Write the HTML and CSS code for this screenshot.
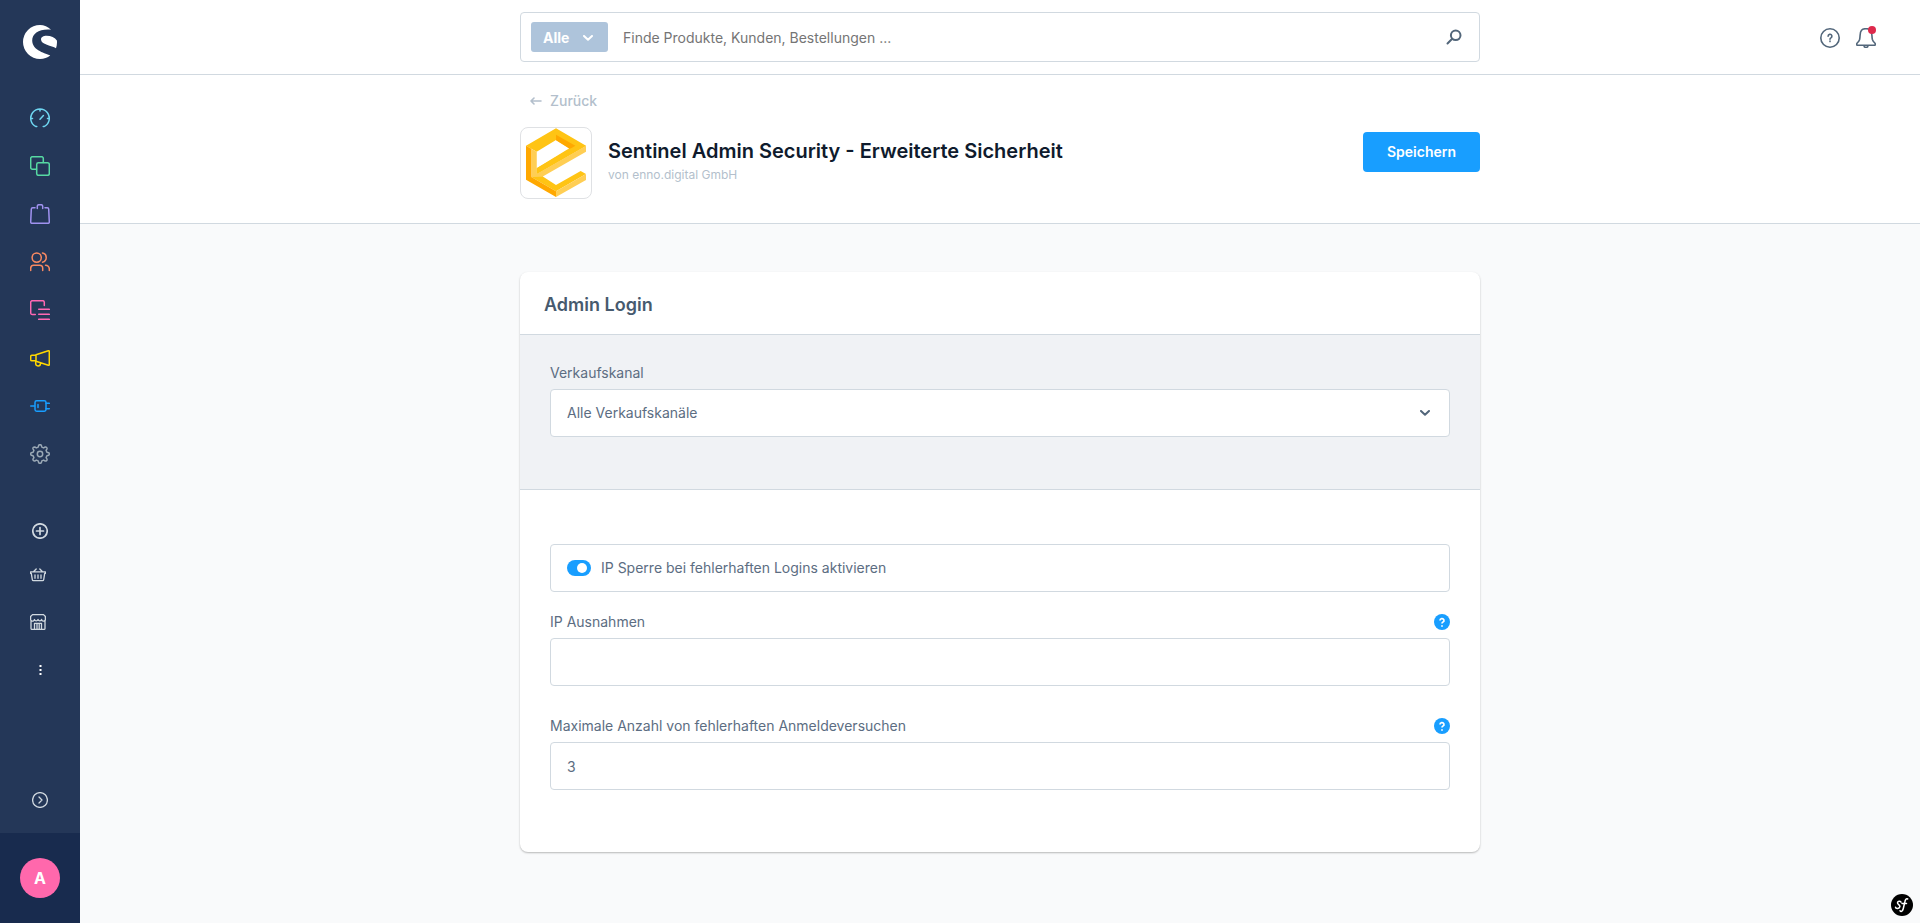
FILE: index.html
```html
<!DOCTYPE html>
<html lang="de">
<head>
<meta charset="utf-8">
<meta name="viewport" content="width=device-width, initial-scale=1">
<title>Sentinel Admin Security</title>
<link rel="stylesheet" href="styles.css">
</head>
<body class="app">
<aside class="sidebar">
  <a class="brand" href="#" aria-label="Startseite">
    <svg width="34" height="34" viewBox="0 0 34 34" fill="#fff"><path d="M28 4.700C25 1.800 21 0 17 0A17 17 0 0 0 17 34C21 34 24.500 32.700 27.200 30.500C23.500 28.300 9.200 26 9.200 15.500C9.200 8.500 16.500 3.600 28 4.700Z"/><path d="M18 14.500C18 12 20.500 10.800 23.500 10.800C28 10.800 32 12.500 33.900 15.500C34.200 18.500 33.800 21 33 23.200C29 20.800 18 19.500 18 14.500Z"/></svg>
  </a>
  <nav class="nav">
    <a class="nav-item cyan" href="#" aria-label="Dashboard"><svg class="icon" viewBox="0 0 20 20"><path d="M6.800 18.600H6A9.300 9.300 0 1 1 14 18.600H13.200M10 1.500V3M1 10.500H2.500M17.500 10.500H19M10 11.200L13.400 7.500"/></svg></a>
    <a class="nav-item green" href="#" aria-label="Kataloge"><svg class="icon" viewBox="0 0 20 20"><rect x="6.700" y="6.700" width="12.600" height="12.600" rx="1.700"/><path d="M6.500 13.300H2.400A1.700 1.700 0 0 1 .7 11.600V2.400A1.700 1.700 0 0 1 2.400 .7H11.600A1.700 1.700 0 0 1 13.300 2.400V6.500"/></svg></a>
    <a class="nav-item violet" href="#" aria-label="Bestellungen"><svg class="icon" viewBox="0 0 20 20"><path d="M5 3.800H2.700A1.400 1.400 0 0 0 1.300 5.100L.7 18A1.300 1.300 0 0 0 2 19.300H18A1.300 1.300 0 0 0 19.300 18L18.700 5.100A1.400 1.400 0 0 0 17.300 3.800H15M7.300 4.500V2.300A1.600 1.600 0 0 1 8.900 .7H11.100A1.600 1.600 0 0 1 12.700 2.300V4.500"/></svg></a>
    <a class="nav-item coral" href="#" aria-label="Kunden"><svg class="icon" viewBox="0 0 20 20"><circle cx="6.700" cy="5.600" r="4.600"/><path d="M12.500 1A4.700 4.700 0 0 1 12.500 10.200M.7 18.500V16.200A3 3 0 0 1 3.700 13.200H9.700A3 3 0 0 1 12.700 16.200V18.500M15.500 13.200A3.700 3.700 0 0 1 19.300 16.900V18.500"/></svg></a>
    <a class="nav-item pink" href="#" aria-label="Inhalte"><svg class="icon" viewBox="0 0 20 20"><path d="M5.300 14.500H2.300A1.600 1.600 0 0 1 .7 12.900V2.300A1.600 1.600 0 0 1 2.300 .7H12.700A1.600 1.600 0 0 1 14.300 2.300V5.500M8.700 9.300H19.300M8.700 14.300H19.300M8.700 19.300H19.300"/></svg></a>
    <a class="nav-item yellow" href="#" aria-label="Marketing"><svg class="icon" viewBox="0 0 20 20"><path d="M6 6.800L18.300 2.700C19 2.500 19.300 2.800 19.300 3.400V16.500C19.300 17.100 19 17.400 18.300 17.200L6 13.200M6 6.800V13.200M6 7.300H1.800A1.100 1.100 0 0 0 .7 8.400V11.700A1.100 1.100 0 0 0 1.800 12.800H6M5.700 13.200V15.400A2.300 2.300 0 0 0 10.500 15.600V14.800"/></svg></a>
    <a class="nav-item blue" href="#" aria-label="Erweiterungen"><svg class="icon" viewBox="0 0 20 20"><rect x="5" y="4.700" width="11" height="10.600" rx="1.700"/><path d="M.7 10H4.500M8 8.500V11.500M16 7.300H19.300M16 12.700H19.300"/></svg></a>
    <a class="nav-item grey" href="#" aria-label="Einstellungen"><svg class="icon" viewBox="0 0 20 20"><circle cx="10" cy="10" r="2.700"/><path d="M8.200 3.100L8.700 1.300Q9 .7 10 .7T11.300 1.300L11.800 3.100L13.600 3.900L15.200 3Q16 2.700 16.600 3.400T17 4.800L16.100 6.400L16.900 8.200L18.700 8.700Q19.300 9 19.300 10T18.700 11.300L16.900 11.800L16.100 13.600L17 15.200Q17.300 16 16.600 16.600T15.200 17L13.600 16.100L11.800 16.900L11.300 18.700Q11 19.300 10 19.300T8.700 18.700L8.200 16.900L6.400 16.100L4.800 17Q4 17.300 3.400 16.600T3 15.200L3.900 13.600L3.100 11.800L1.300 11.300Q.7 11 .7 10T1.300 8.700L3.100 8.200L3.900 6.400L3 4.800Q2.700 4 3.400 3.400T4.800 3L6.400 3.900Z"/></svg></a>
  </nav>
  <div class="channels">
    <button class="channel" type="button" aria-label="Verkaufskanal hinzufügen"><svg width="16" height="16" viewBox="0 0 16 16" class="line thick"><circle cx="8" cy="8" r="7.200"/><path d="M8 4.500V11.500M4.500 8H11.500"/></svg></button>
    <a class="channel shifted" href="#" aria-label="Headless"><svg width="16" height="16" viewBox="0 0 16 16" class="line"><path d="M.6 4.800H15.400V6.400H14.700L13.700 12.600A1.300 1.300 0 0 1 12.400 13.700H3.600A1.300 1.300 0 0 1 2.300 12.600L1.300 6.400H.6ZM3.700 4.500L6.200 2M12.300 4.500L9.800 2M5 8V11.300M8 8V11.300M11 8V11.300"/></svg></a>
    <a class="channel shifted" href="#" aria-label="Storefront"><svg width="16" height="16" viewBox="0 0 16 16" class="line"><path d="M1 6.500V14.400Q1 15.400 2 15.400H14Q15 15.400 15 14.400V6.500M2.500 .6H13.500L15.400 2.500V5A1.900 1.900 0 0 1 11.600 5.500A1.900 1.900 0 0 1 8 5.500A1.900 1.900 0 0 1 4.400 5.500A1.900 1.900 0 0 1 .6 5V2.500ZM4.500 15V9.300H11.500V15M7 9.500V15M9.200 9.500V15"/></svg></a>
    <button class="channel" type="button" aria-label="Mehr"><svg width="16" height="16" viewBox="0 0 16 16" fill="#fff"><path d="M7.500 3h2v2h-2zM7.500 7h2v2h-2zM7.500 11h2v2h-2z"/></svg></button>
  </div>
  <button class="collapse" type="button" aria-label="Menü ausklappen"><svg width="16" height="16" viewBox="0 0 16 16" class="line"><circle cx="8" cy="8" r="7.400"/><path d="M7 5L10 8L7 11"/></svg></button>
  <div class="user"><button class="avatar" type="button">A</button></div>
</aside>
<div class="page">
  <header class="topbar">
    <div class="search">
      <button class="scope" type="button">Alle <svg width="10" height="6" viewBox="0 0 10 6" class="chevron"><path d="M1 1L5 4.800L9 1"/></svg></button>
      <input class="search-input" type="search" aria-label="Suche" placeholder="Finde Produkte, Kunden, Bestellungen ...">
      <button class="plain" type="button" aria-label="Suchen"><svg width="16" height="16" viewBox="0 0 16 16" class="slate bold"><circle cx="9.700" cy="6.300" r="4.800"/><path d="M6.200 9.800L1.500 14.500"/></svg></button>
    </div>
    <div class="actions">
      <button class="plain" type="button" aria-label="Hilfe"><svg width="20" height="20" viewBox="0 0 20 20" class="slate"><circle cx="10" cy="10" r="9.200"/><path d="M8.100 8.300A1.900 1.900 0 1 1 10.900 9.900Q10 10.300 10 11.200M10 13V13.600"/></svg></button>
      <button class="plain bell" type="button" aria-label="Benachrichtigungen"><svg width="20" height="20" viewBox="0 0 20 20" class="slate"><path d="M1.600 17.200Q.6 17.200 .7 16C1 14.500 2.700 14.500 3.600 11.500C4.500 8 3.500 4.500 5.500 2.200Q7 .7 10 .7T14.500 2.200C16.500 4.500 15.500 8 16.400 11.500C17.300 14.500 19 14.500 19.300 16Q19.400 17.200 18.400 17.200ZM8 17.400A2 2 0 0 0 12 17.400"/></svg><span class="badge"></span></button>
    </div>
  </header>
  <section class="heading">
    <div class="container">
      <a class="back" href="#"><svg width="12" height="8" viewBox="0 0 12 8"><path d="M11 4H1M4 1L1 4L4 7"/></svg>Zurück</a>
      <div class="title-row">
        <div class="logo"><svg viewBox="63 384 210 210"><path fill="#ffc414" d="M78 437L168 385L258 437L110 522V455L94 446Z"/><path fill="#fff" d="M110 455L168 420L208 445L110 505Z"/><path fill="#ffa800" d="M168 404L226 437L210 447L168 421Z"/><path fill="#ffce54" d="M94 446L110 455V522L94 531ZM258 437V455L127 530L94 531Z"/><path fill="#ffc414" d="M110 505L210 446L258 437L110 522Z"/><path fill="#ffc414" d="M94 531L125 527L168 555L242 513L258 522L168 574Z"/><path fill="#ffce54" d="M168 574L258 522V540L168 591ZM110 522L127 513V530L94 531Z"/><path fill="#ffa800" d="M78 437L94 446V531L168 574V591L78 539Z"/></svg></div>
        <div class="titles">
          <h1>Sentinel Admin Security - Erweiterte Sicherheit</h1>
          <p>von enno.digital GmbH</p>
        </div>
        <button class="save" type="submit" form="config">Speichern</button>
      </div>
    </div>
  </section>
  <main class="content">
    <form class="card" id="config">
      <h2>Admin Login</h2>
      <div class="channel-area">
        <label class="label" for="sales">Verkaufskanal</label>
        <div class="select">
          <select class="control" id="sales"><option>Alle Verkaufskanäle</option></select>
          <svg width="10" height="6" viewBox="0 0 10 6" class="chevron select-arrow"><path d="M1 1L5 4.800L9 1"/></svg>
        </div>
      </div>
      <div class="fields">
        <label class="control switch"><input class="toggle" type="checkbox" checked>IP Sperre bei fehlerhaften Logins aktivieren</label>
        <div class="field">
          <div class="label-row"><label class="label" for="ips">IP Ausnahmen</label><button class="plain" type="button" aria-label="Hilfe"><svg width="16" height="16" viewBox="0 0 16 16" class="help"><circle cx="8" cy="8" r="8"/><path d="M6 6.500A2 1.800 0 1 1 9 8Q8 8.500 8 9.600M8 11.200V12.800"/></svg></button></div>
          <input class="control" id="ips" type="text">
        </div>
        <div class="field">
          <div class="label-row"><label class="label" for="max">Maximale Anzahl von fehlerhaften Anmeldeversuchen</label><button class="plain" type="button" aria-label="Hilfe"><svg width="16" height="16" viewBox="0 0 16 16" class="help"><circle cx="8" cy="8" r="8"/><path d="M6 6.500A2 1.800 0 1 1 9 8Q8 8.500 8 9.600M8 11.200V12.800"/></svg></button></div>
          <input class="control" id="max" type="text" inputmode="numeric" value="3">
        </div>
      </div>
    </form>
  </main>
</div>
<button class="profiler" type="button" aria-label="Symfony"><svg width="22" height="22" viewBox="0 0 22 22"><circle cx="11" cy="11" r="11"/><path d="M10 8.200C9.600 6.500 6.200 7.200 6.500 9C6.700 10.500 9.300 11 8.900 12.700C8.500 14.800 4.700 15 4.500 13.200M9 16.800C10.500 18.500 11.800 16.500 12.300 14.500L13.800 8C14.300 5.500 15.300 4.200 16.700 5M11 9.500H15.500"/></svg></button>
</body>
</html>
```
FILE: styles.css
```css
* { box-sizing: border-box; }
.app {
  display: flex;
  min-height: 100vh;
  margin: 0;
  background: #f9fafb;
  color: #52667a;
  font: 14px/20px Inter, "Liberation Sans", sans-serif;
}
button, input, select { font: inherit; color: inherit; }
button { cursor: pointer; }
svg { display: block; }
h1, h2, p { margin: 0; }

.sidebar {
  position: sticky;
  top: 0;
  display: flex;
  flex: 0 0 80px;
  flex-direction: column;
  height: 100vh;
  background: #243758;
}
.brand { display: flex; justify-content: center; padding: 25px 0 35px; }
.nav-item, .channel, .collapse {
  display: flex;
  align-items: center;
  justify-content: center;
  width: 80px;
  height: 48px;
  padding: 0;
  border: 0;
  background: none;
}
.icon {
  width: 20px;
  height: 20px;
  fill: none;
  stroke: currentColor;
  stroke-width: 1.5;
  stroke-linecap: round;
  stroke-linejoin: round;
}
.cyan { color: #6ed5f0; }
.green { color: #57d9a3; }
.violet { color: #a092f0; }
.coral { color: #f88962; }
.pink { color: #ff68b4; }
.yellow { color: #ffd700; }
.blue { color: #189eff; }
.grey { color: #9aa8b5; }
.channels { padding-top: 30px; }
.channel:first-child { height: 46px; }
.channel.shifted { padding-right: 4px; }
.channel:nth-child(2) { height: 42px; }
.channel:nth-child(3) { height: 52px; }
.channel:last-child { height: 44px; }
.line {
  fill: none;
  stroke: #d1d9e0;
  stroke-width: 1.3;
  stroke-linecap: round;
  stroke-linejoin: round;
}
.line.thick { stroke-width: 1.7; }
.collapse { height: 66px; margin-top: auto; }
.user { display: flex; justify-content: center; padding: 25px 0; background: #182b4e; }
.avatar {
  width: 40px;
  height: 40px;
  padding: 0;
  border: 0;
  border-radius: 50%;
  background: #ff68ac;
  color: #fff;
  font-size: 16px;
  font-weight: 700;
}

.page { flex: 1; min-width: 0; }
.topbar {
  display: grid;
  grid-template-columns: 1fr minmax(0, 960px) 1fr;
  align-items: center;
  padding: 12px 0;
  border-bottom: 1px solid #d1d9e0;
  background: #fff;
}
.search {
  display: flex;
  grid-column: 2;
  align-items: center;
  height: 50px;
  padding: 0 17px 0 10px;
  border: 1px solid #d1d9e0;
  border-radius: 4px;
}
.scope {
  display: flex;
  align-items: center;
  justify-content: space-between;
  width: 77px;
  height: 30px;
  padding: 2px 15px 0 12px;
  border: 0;
  border-radius: 3px;
  background: #aec4db;
  color: #fff;
  font-weight: 700;
}
.chevron { fill: none; stroke: currentColor; stroke-width: 2; stroke-linecap: round; stroke-linejoin: round; }
.search-input { flex: 1; min-width: 0; padding: 2px 15px 0; border: 0; background: none; outline: 0; }
.search-input::placeholder { color: #757575; opacity: 1; }
.plain { padding: 0; border: 0; background: none; }
.slate { fill: none; stroke: #52667a; stroke-width: 1.6; stroke-linecap: round; stroke-linejoin: round; }
.bold { stroke-width: 2; }
.actions { display: flex; gap: 16px; justify-content: flex-end; padding: 2px 44px 0 0; }
.bell { position: relative; }
.badge { position: absolute; top: -2px; right: 0; width: 8px; height: 8px; border-radius: 50%; background: #de294c; }

.heading { padding: 15px 0 24px; border-bottom: 1px solid #d1d9e0; background: #fff; }
.container { max-width: 960px; margin: 0 auto; }
.back {
  display: inline-flex;
  gap: 8px;
  align-items: center;
  padding-left: 10px;
  color: #b3bfcc;
  font-weight: 500;
  text-decoration: none;
}
.back svg { fill: none; stroke: currentColor; stroke-width: 1.6; stroke-linecap: round; stroke-linejoin: round; }
.title-row { display: flex; gap: 16px; align-items: flex-start; padding-top: 16px; }
.logo { width: 72px; height: 72px; border: 1px solid #dfe1e4; border-radius: 8px; }
.titles { flex: 1; padding-top: 10px; }
h1 { color: #0f1b2d; font-size: 20px; font-weight: 600; line-height: 28px; }
.titles p { color: #b3bfcc; font-size: 12px; }
.save {
  height: 40px;
  margin-top: 5px;
  padding: 0 24px;
  border: 0;
  border-radius: 4px;
  background: #189eff;
  color: #fff;
  font-weight: 600;
}

.content { padding: 48px 0; }
.card {
  max-width: 960px;
  margin: 0 auto;
  border-radius: 8px;
  background: #fff;
  box-shadow: 0 1px 2px #0004;
}
h2 { padding: 21px 24px 17px; font-size: 18px; font-weight: 600; line-height: 24px; color: #475a6e; }
.channel-area { padding: 28px 30px 52px; border-top: 1px solid #d1d9e0; border-bottom: 1px solid #d1d9e0; background: #f0f2f5; }
.label { color: #5c6d82; }
.channel-area .label { display: block; margin-bottom: 6px; }
.control {
  display: block;
  width: 100%;
  height: 48px;
  padding: 0 16px;
  border: 1px solid #d1d9e0;
  border-radius: 4px;
  background: #fff;
  color: #5c6d82;
  appearance: none;
}
.select { position: relative; }
.select-arrow { position: absolute; top: 21px; right: 20px; color: #52667a; pointer-events: none; }
.fields { padding: 54px 30px 62px; }
.switch { display: flex; gap: 10px; align-items: center; }
.toggle { width: 24px; height: 16px; margin: 0; border-radius: 8px; background: #189eff; appearance: none; }
.toggle::before { display: block; width: 10px; height: 10px; margin: 3px 0 0 10px; border-radius: 50%; background: #fff; content: ""; }
.field { padding-top: 20px; }
.field + .field { padding-top: 30px; }
.label-row { display: flex; align-items: center; justify-content: space-between; margin-bottom: 6px; }
.help { fill: #189eff; }
.help path { fill: none; stroke: #fff; stroke-width: 1.7; }

.profiler { position: fixed; right: 7px; bottom: 7px; padding: 0; border: 0; background: none; }
.profiler path { fill: none; stroke: #fff; stroke-width: 1.5; stroke-linecap: round; }
```
